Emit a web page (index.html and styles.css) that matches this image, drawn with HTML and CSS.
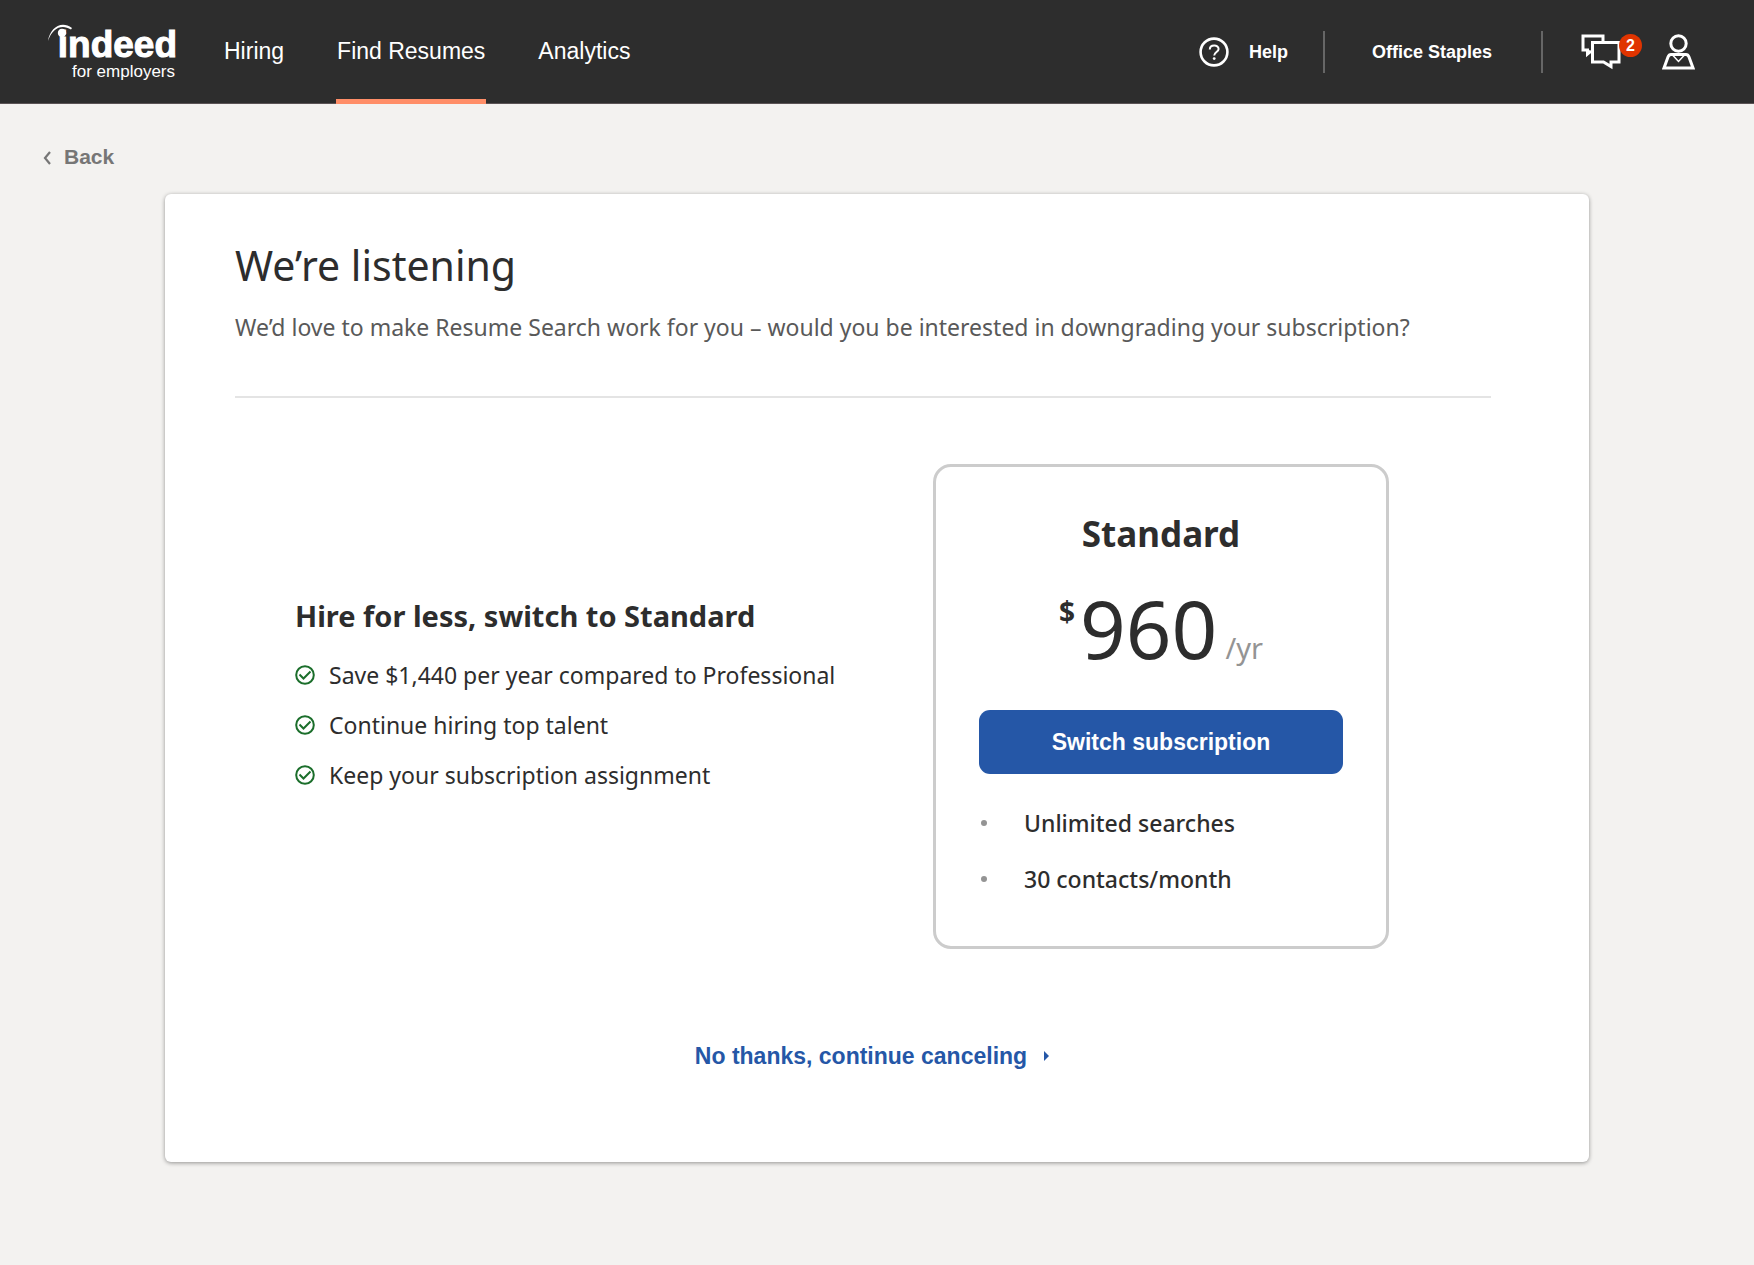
FILE: index.html
```html
<!DOCTYPE html>
<html lang="en">
<head>
<meta charset="utf-8">
<meta name="viewport" content="width=device-width, initial-scale=1">
<title>We’re listening – Indeed for Employers</title>
<link rel="stylesheet" href="styles.css">
</head>
<body>
<header class="topbar">
  <a class="logo" href="#">
    <svg class="logo-arc" viewBox="0 0 26 24" aria-hidden="true"><path d="M0 17C2 4 13-4 24 4L23 5.500C14 0 4.500 3.500 0 17Z" fill="#fff"/><circle cx="14" cy="9" r="4.200" fill="#fff"/></svg>
    <span class="logo-name">indeed</span>
    <span class="logo-sub">for employers</span>
  </a>
  <nav class="nav">
    <a class="nav-link" href="#">Hiring</a>
    <a class="nav-link active" href="#">Find Resumes</a>
    <a class="nav-link" href="#">Analytics</a>
  </nav>
  <div class="tools">
    <a class="help" href="#">
      <svg class="help-icon" viewBox="0 0 30 30" aria-hidden="true" fill="none" stroke="#fff"><circle cx="15" cy="15" r="13.4" stroke-width="2.6"/><path d="M10.8 12.4C10.8 7.4 19.6 7.4 19.6 12C19.6 15 15.2 15.2 15.2 18.6" stroke-width="2"/><circle cx="15.2" cy="21.6" r="1.4" fill="#fff" stroke="none"/></svg>
      Help
    </a>
    <a class="account" href="#">Office Staples</a>
    <a class="messages" href="#" aria-label="Messages">
      <svg class="messages-icon" viewBox="0 0 40 36" aria-hidden="true" fill="none" stroke="#fff" stroke-width="3"><path d="M22 7V2H2V16H6.5V20L10 17"/><path d="M11.5 8.500H38V28H30V32.500L22.500 28H11.500Z"/></svg>
      <span class="badge">2</span>
    </a>
    <a class="profile" href="#" aria-label="Profile">
      <svg class="profile-icon" viewBox="0 0 33 36" aria-hidden="true" fill="none" stroke="#fff"><circle cx="16.500" cy="9.500" r="7.700" stroke-width="3"/><path d="M2 34L6 23Q7 20.500 9 20.500H24Q26 20.500 27 23L31 34Z" stroke-width="3"/><path d="M11 21.500L16.500 27.500L22 21.500" stroke-width="1.500"/></svg>
    </a>
  </div>
</header>
<main class="page">
  <a class="back" href="#">
    <svg class="back-icon" viewBox="0 0 10 14" aria-hidden="true"><path d="M8 2L3 8L8 14" fill="none" stroke="#767676" stroke-width="2.200"/></svg>
    Back
  </a>
  <section class="card">
    <div class="intro">
      <h1 class="title">We’re listening</h1>
      <p class="subtitle">We’d love to make Resume Search work for you – would you be interested in downgrading your subscription?</p>
    </div>
    <div class="offer">
      <div class="pitch">
        <h2 class="pitch-title">Hire for less, switch to Standard</h2>
        <ul class="benefits">
          <li class="benefit"><svg class="check" viewBox="0 0 20 20" aria-hidden="true" fill="none" stroke="#1b6e2b" stroke-width="2"><circle cx="10" cy="10" r="8.800"/><path d="M4.500 9.500L8.500 13.500L15.500 6.500"/></svg>Save $1,440 per year compared to Professional</li>
          <li class="benefit"><svg class="check" viewBox="0 0 20 20" aria-hidden="true" fill="none" stroke="#1b6e2b" stroke-width="2"><circle cx="10" cy="10" r="8.800"/><path d="M4.500 9.500L8.500 13.500L15.500 6.500"/></svg>Continue hiring top talent</li>
          <li class="benefit"><svg class="check" viewBox="0 0 20 20" aria-hidden="true" fill="none" stroke="#1b6e2b" stroke-width="2"><circle cx="10" cy="10" r="8.800"/><path d="M4.500 9.500L8.500 13.500L15.500 6.500"/></svg>Keep your subscription assignment</li>
        </ul>
      </div>
      <div class="plan">
        <h2 class="plan-name">Standard</h2>
        <p class="price"><span class="currency">$</span><span class="amount">960</span><span class="period">/yr</span></p>
        <button class="switch" type="button">Switch subscription</button>
        <ul class="features">
          <li class="feature">Unlimited searches</li>
          <li class="feature">30 contacts/month</li>
        </ul>
      </div>
    </div>
    <a class="decline" href="#">No thanks, continue canceling
      <svg class="decline-icon" viewBox="0 0 6 10" aria-hidden="true"><path d="M0 0L5 5L0 10Z" fill="#2557a7"/></svg>
    </a>
  </section>
</main>
</body>
</html>
```
FILE: styles.css
```css
* {
  box-sizing: border-box;
}

body {
  margin: 0;
  background: #f3f2f0;
  color: #2d2d2d;
  font-family: "Noto Sans", sans-serif;
}

a {
  color: inherit;
  text-decoration: none;
}

h1, h2, p, ul {
  margin: 0;
  padding: 0;
}

ul {
  list-style: none;
}

svg {
  display: block;
  flex: none;
}

.topbar,
.back,
.switch,
.decline {
  font-family: "Liberation Sans", Arial, sans-serif;
}

.topbar {
  display: flex;
  height: 104px;
  padding: 0 59px 0 48px;
  background: #2d2d2d;
  border-bottom: 1px solid #5a5355;
  color: #fff;
}

.logo {
  position: relative;
  display: flex;
  flex-direction: column;
  align-items: flex-end;
  width: 129px;
  padding-top: 26px;
}

.logo-arc {
  position: absolute;
  left: 0;
  top: 24px;
  width: 26px;
  height: 24px;
}

.logo-name {
  font-size: 37px;
  line-height: 38px;
  font-weight: 700;
  -webkit-text-stroke: 1px #fff;
}

.logo-sub {
  margin-right: 2px;
  font-size: 17px;
  line-height: 15px;
}

.nav {
  display: flex;
  gap: 51px;
  margin-left: 46px;
  margin-bottom: -1px;
}

.nav-link {
  padding: 37px 1px 0;
  font-size: 23px;
  line-height: 28px;
}

.nav-link.active {
  border-bottom: 5px solid #ff8e68;
}

.tools {
  display: flex;
  align-items: center;
  margin-left: auto;
  font-size: 18px;
  line-height: 22px;
  font-weight: 700;
}

.help {
  display: flex;
  align-items: center;
  gap: 20px;
  padding-right: 35px;
}

.help-icon {
  width: 30px;
  height: 30px;
}

.account {
  padding: 10px 49px 10px 47px;
  border: solid #666;
  border-width: 0 2px;
}

.messages {
  position: relative;
  margin-left: 38px;
}

.messages-icon {
  width: 40px;
  height: 36px;
}

.badge {
  position: absolute;
  left: 38px;
  top: 0;
  width: 23px;
  height: 23px;
  border-radius: 50%;
  background: #e03400;
  font-size: 16px;
  line-height: 23px;
  text-align: center;
}

.profile {
  margin-left: 41px;
}

.profile-icon {
  width: 33px;
  height: 36px;
}

.page {
  padding: 40px 42px 102px;
}

.back {
  display: inline-flex;
  align-items: center;
  gap: 12px;
  color: #767676;
  font-size: 21px;
  line-height: 26px;
  font-weight: 700;
}

.back-icon {
  width: 10px;
  height: 14px;
  overflow: visible;
}

.card {
  margin: 24px 123px 0;
  padding: 45px 98px 90px 70px;
  border-radius: 6px;
  background: #fff;
  box-shadow: 0 1px 4px rgba(0, 0, 0, 0.4);
}

.intro {
  padding-bottom: 52px;
  border-bottom: 2px solid #e4e4e4;
}

.title {
  font-size: 41px;
  line-height: 52px;
  font-weight: 400;
}

.subtitle {
  margin-top: 19px;
  color: #595959;
  font-size: 23px;
  line-height: 34px;
}

.offer {
  display: flex;
  justify-content: space-between;
  align-items: center;
  padding: 66px 102px 0 60px;
}

.pitch-title {
  font-size: 29px;
  line-height: 40px;
  font-weight: 700;
}

.benefits {
  display: grid;
  gap: 16px;
  margin: 22px 0 26px;
}

.benefit {
  display: flex;
  align-items: center;
  gap: 14px;
  font-size: 23px;
  line-height: 34px;
}

.check {
  width: 20px;
  height: 20px;
}

.plan {
  width: 456px;
  padding: 43px 43px 50px;
  border: 3px solid #ccc;
  border-radius: 18px;
}

.plan-name {
  font-size: 35px;
  line-height: 48px;
  text-align: center;
}

.price {
  display: flex;
  justify-content: center;
  align-items: baseline;
  margin-top: 22px;
  line-height: 96px;
}

.currency {
  align-self: flex-start;
  margin-right: 5px;
  font-size: 28px;
  line-height: 62px;
  font-weight: 700;
}

.amount {
  font-size: 80px;
}

.period {
  margin-left: 8px;
  color: #949494;
  font-size: 29px;
}

.switch {
  width: 100%;
  height: 64px;
  margin-top: 14px;
  border: 0;
  border-radius: 11px;
  background: #2557a7;
  color: #fff;
  font-size: 23px;
  font-weight: 700;
}

.features {
  display: grid;
  gap: 22px;
  margin-top: 32px;
}

.feature {
  display: flex;
  align-items: center;
  gap: 37px;
  padding-left: 2px;
  font-size: 23px;
  line-height: 34px;
  font-weight: 500;
}

.feature::before {
  content: "";
  width: 6px;
  height: 6px;
  border-radius: 50%;
  background: #949494;
}

.decline {
  display: flex;
  justify-content: center;
  align-items: center;
  gap: 17px;
  margin-top: 91px;
  padding-left: 19px;
  color: #2557a7;
  font-size: 23px;
  line-height: 32px;
  font-weight: 700;
}

.decline-icon {
  width: 6px;
  height: 10px;
}
```
